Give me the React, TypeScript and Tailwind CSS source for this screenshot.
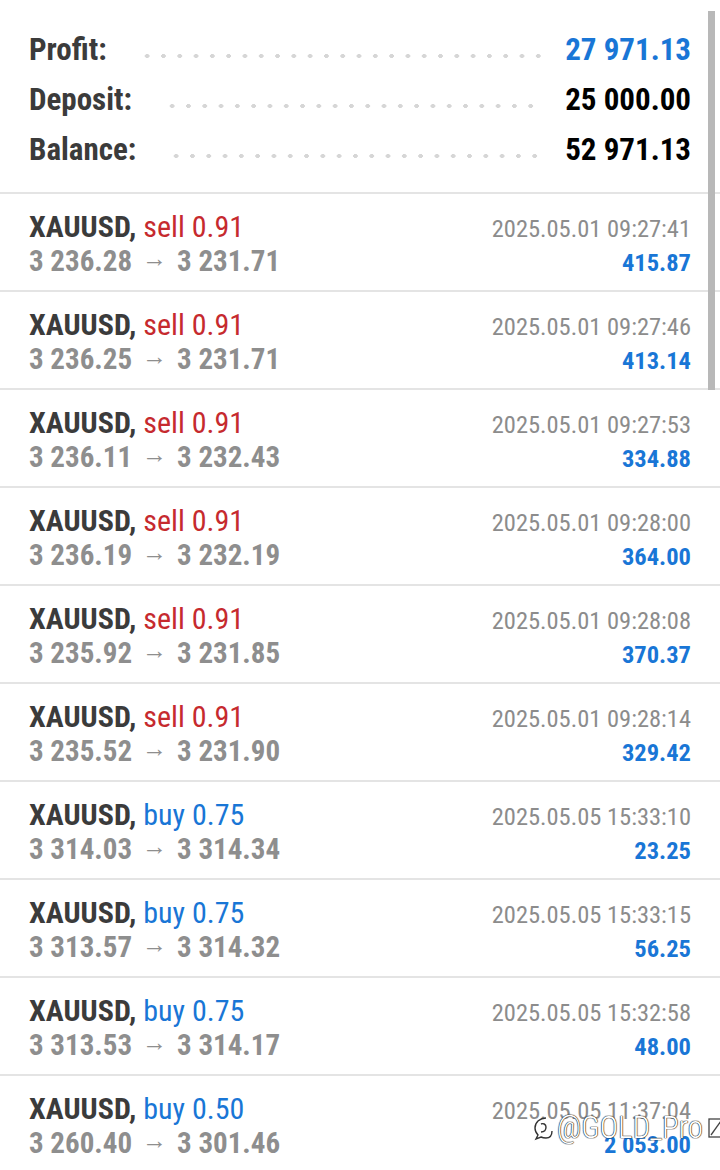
const trades = [
  { side: 'sell', lot: '0.91', open: '3 236.28', close: '3 231.71', time: '2025.05.01 09:27:41', profit: '415.87' },
  { side: 'sell', lot: '0.91', open: '3 236.25', close: '3 231.71', time: '2025.05.01 09:27:46', profit: '413.14' },
  { side: 'sell', lot: '0.91', open: '3 236.11', close: '3 232.43', time: '2025.05.01 09:27:53', profit: '334.88' },
  { side: 'sell', lot: '0.91', open: '3 236.19', close: '3 232.19', time: '2025.05.01 09:28:00', profit: '364.00' },
  { side: 'sell', lot: '0.91', open: '3 235.92', close: '3 231.85', time: '2025.05.01 09:28:08', profit: '370.37' },
  { side: 'sell', lot: '0.91', open: '3 235.52', close: '3 231.90', time: '2025.05.01 09:28:14', profit: '329.42' },
  { side: 'buy', lot: '0.75', open: '3 314.03', close: '3 314.34', time: '2025.05.05 15:33:10', profit: '23.25' },
  { side: 'buy', lot: '0.75', open: '3 313.57', close: '3 314.32', time: '2025.05.05 15:33:15', profit: '56.25' },
  { side: 'buy', lot: '0.75', open: '3 313.53', close: '3 314.17', time: '2025.05.05 15:32:58', profit: '48.00' },
  { side: 'buy', lot: '0.50', open: '3 260.40', close: '3 301.46', time: '2025.05.05 11:37:04', profit: '2 053.00' },
]

const summary = [
  { label: 'Profit:', value: '27 971.13', blue: true },
  { label: 'Deposit:', value: '25 000.00', blue: false },
  { label: 'Balance:', value: '52 971.13', blue: false },
]

export default function App() {
  return (
    <div
      className="relative w-[720px] h-[1170px] overflow-hidden bg-white font-stretch-condensed"
      style={{ fontFamily: 'Roboto, "Noto Sans", sans-serif' }}
    >
      {/* Summary block */}
      <div className="h-[194px] pt-[24px] px-[29px] border-b-2 border-[#e4e4e4]">
        {summary.map((s) => (
          <div key={s.label} className="flex items-center h-[50px]">
            <span className="text-[31px] font-bold text-[#3b3b3b] leading-none">{s.label}</span>
            <div className="flex-1 ml-[32px] mr-[24px] h-[6px] mt-[14px] bg-[radial-gradient(circle,#d6d6d6_2px,transparent_2.3px)] bg-[length:16.3px_6px] bg-repeat-x" />
            <span className={`text-[31px] font-bold leading-none ${s.blue ? 'text-[#1976d6]' : 'text-black'}`}>
              {s.value}
            </span>
          </div>
        ))}
      </div>

      {/* Trade rows */}
      {trades.map((t, i) => (
        <div key={i} className="h-[98px] px-[29px] pt-[16px] border-b-2 border-[#e4e4e4]">
          <div className="flex items-baseline justify-between h-[34px]">
            <span className="text-[30px] leading-[34px]">
              <span className="font-bold text-[#3b3b3b]">XAUUSD, </span>
              <span className={t.side === 'sell' ? 'text-[#c62a2e]' : 'text-[#1976d6]'}>
                {t.side} {t.lot}
              </span>
            </span>
            <span className="text-[24.5px] leading-[34px] text-[#8c8c8c]">{t.time}</span>
          </div>
          <div className="flex items-baseline justify-between h-[34px]">
            <span className="text-[29px] leading-[34px] font-bold text-[#8e8e8e]">
              {t.open}
              <span className="inline-block mx-[10px] font-normal text-[25px] relative top-[-4px]">→</span>
              {t.close}
            </span>
            <span className="text-[24.5px] leading-[34px] font-bold text-[#1976d6]">{t.profit}</span>
          </div>
        </div>
      ))}

      {/* Scroll indicator */}
      <div className="absolute left-[708px] top-[11px] w-[7px] h-[379px] bg-[#b8b8b8]" />

      {/* Watermark */}
      <div className="absolute left-[532px] top-[1112px] flex items-center gap-[3px] text-[31px] font-light leading-none text-white [text-shadow:0_0_1px_#222,0_0_1px_#222,0_0_1px_#222]">
        <svg width="22" height="26" viewBox="0 0 22 26" fill="none" stroke="#333" strokeWidth="1.4">
          <path d="M14 3c-6 0-11 4-11 10 0 3 1 5 3 7l-2 4 5-2c2 1 3 1 5 1 4 0 6-3 6-7" />
          <path d="M9 9c2-1 5 0 5 3s-2 5-5 5" />
        </svg>
        <span>@GOLD_Pro</span>
        <svg width="16" height="20" viewBox="0 0 16 20" fill="none" stroke="#444" strokeWidth="1.3" className="ml-[2px]">
          <rect x="1" y="1" width="14" height="18" />
          <path d="M3 17L13 3" />
        </svg>
      </div>
    </div>
  )
}
